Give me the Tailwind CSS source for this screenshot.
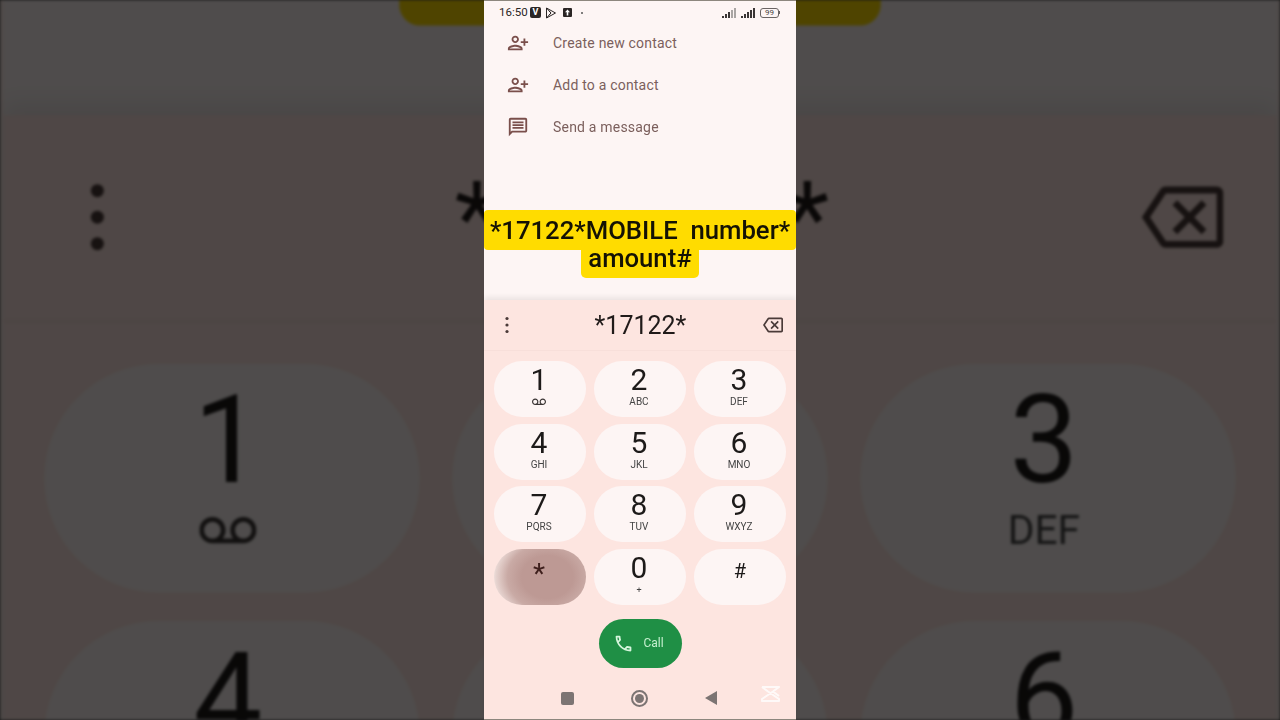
<!DOCTYPE html>
<html lang="en">
  <head>
    <meta charset="UTF-8" />
    <meta name="viewport" content="width=device-width, initial-scale=1.0" />
    <title>Dialer</title>
    <script src="https://cdn.jsdelivr.net/npm/@tailwindcss/browser@4"></script>
  </head>
  <body class="bg-[#4e4e4e] font-[Roboto,sans-serif] overflow-hidden">
    <div class="relative w-[1280px] h-[720px] overflow-hidden">
      <!-- Zoomed, dimmed copy of the phone behind it (filled by JS) -->
      <div class="absolute inset-0 overflow-hidden blur-[1.5px] bg-[#fdeeea]">
        <div id="backdrop" class="w-[312px] h-[720px] mx-auto scale-[4.08]"></div>
      </div>
      <div class="absolute inset-0 bg-black/[0.69]"></div>

      <!-- Phone -->
      <div id="phone" class="relative w-[312px] h-[720px] mx-auto flex flex-col bg-[#fdf5f4] border-t border-b border-[#8d877e]">
        <!-- Status bar -->
        <div class="h-[19px] flex items-center pl-[15px] pr-[16px] mt-[2px] text-[#2a2524]">
          <span class="text-[11.5px] leading-none w-[31px]">16:50</span>
          <span class="w-[11px] h-[11px] rounded-[2px] bg-[#2a2524] text-white text-[9px] font-bold leading-[11px] text-center">V</span>
          <svg class="w-[12px] h-[12px] ml-[4px]" viewBox="0 0 12 12" fill="none" stroke="#2a2524" stroke-width="1"><path d="M1.5 1 L10.5 6 L1.5 11 Z M1.5 1 L6 6 L1.5 11 M4 4 L6 6 L4 8"/></svg>
          <svg class="w-[9px] h-[9px] ml-[6px]" viewBox="0 0 9 9"><rect width="9" height="9" rx="1" fill="#2a2524"/><path d="M4.5 1.5 L7 4.2 H5.3 V7.5 H3.7 V4.2 H2 Z" fill="#fff"/></svg>
          <span class="w-[2px] h-[2px] rounded-full bg-[#555] ml-[9px]"></span>
          <div class="flex-1"></div>
          <svg class="w-[15px] h-[10px]" viewBox="0 0 15 10"><path d="M0 8h2v2H0zM3 6h2v4H3zM6 4h2v6H6z" fill="#3a3534"/><path d="M9 2h2v8H9zM12 0h2v10h-2z" fill="#a9a5a3"/></svg>
          <svg class="w-[15px] h-[10px] ml-[4px]" viewBox="0 0 15 10" fill="#3a3534"><path d="M0 8h2v2H0zM3 6h2v4H3zM6 4h2v6H6zM9 2h2v8H9zM12 0h2v10h-2z"/></svg>
          <span class="ml-[4px] w-[19px] h-[10px] rounded-[3px] border border-[#6a6463] text-[8px] leading-[8px] text-center text-[#4a4443]">99</span>
          <span class="w-[1px] h-[3px] bg-[#6a6463]"></span>
        </div>

        <!-- Actions -->
        <div class="text-[14px] tracking-[0.2px] text-[#7b5f5c]">
          <div class="h-[42px] flex items-center pl-[23px]">
            <svg class="w-[22px] h-[22px] -scale-x-100" viewBox="0 0 24 24" fill="#7a4f4b"><path d="M15 12c2.21 0 4-1.79 4-4s-1.79-4-4-4-4 1.79-4 4 1.79 4 4 4zm0-6c1.1 0 2 .9 2 2s-.9 2-2 2-2-.9-2-2 .9-2 2-2zm0 8c-2.67 0-8 1.34-8 4v2h16v-2c0-2.66-5.33-4-8-4zm-6 4c.22-.72 3.31-2 6-2 2.7 0 5.8 1.29 6 2H9zm-3-3v-3h3v-2H6V7H4v3H1v2h3v3h2z"/></svg>
            <span class="ml-[24px]">Create new contact</span>
          </div>
          <div class="h-[42px] flex items-center pl-[23px]">
            <svg class="w-[22px] h-[22px] -scale-x-100" viewBox="0 0 24 24" fill="#7a4f4b"><path d="M15 12c2.21 0 4-1.79 4-4s-1.79-4-4-4-4 1.79-4 4 1.79 4 4 4zm0-6c1.1 0 2 .9 2 2s-.9 2-2 2-2-.9-2-2 .9-2 2-2zm0 8c-2.67 0-8 1.34-8 4v2h16v-2c0-2.66-5.33-4-8-4zm-6 4c.22-.72 3.31-2 6-2 2.7 0 5.8 1.29 6 2H9zm-3-3v-3h3v-2H6V7H4v3H1v2h3v3h2z"/></svg>
            <span class="ml-[24px]">Add to a contact</span>
          </div>
          <div class="h-[42px] flex items-center pl-[23px]">
            <svg class="w-[22px] h-[22px]" viewBox="0 0 24 24" fill="#7a4f4b"><path d="M20 2H4c-1.1 0-1.99.9-1.99 2L2 22l4-4h14c1.1 0 2-.9 2-2V4c0-1.1-.9-2-2-2zm0 14H5.17L4 17.17V4h16v12zM6 12h12v2H6zm0-3h12v2H6zm0-3h12v2H6z"/></svg>
            <span class="ml-[24px]">Send a message</span>
          </div>
        </div>

        <!-- Caption -->
        <div class="mt-[62px] flex flex-col items-center font-medium text-[25.7px] text-[#141204] whitespace-pre">
          <div class="w-full h-[40px] bg-[#ffdc00] rounded-[4px] leading-[40px] text-center">*17122*MOBILE  number*</div>
          <div class="h-[28px] px-[7px] bg-[#ffdc00] rounded-b-[5px] leading-[16px] text-center">amount#</div>
        </div>

        <!-- Dial pad -->
        <div class="mt-[22px] flex-1 flex flex-col bg-[#fde5e0] shadow-[0_-3px_5px_rgba(0,0,0,0.07)]">
          <div class="h-[51px] flex items-center justify-between pl-[12px] pr-[13px] border-b border-[#f8dfda]">
            <svg class="w-[22px] h-[22px]" viewBox="0 0 22 22" fill="#4a3a38"><circle cx="11" cy="4.5" r="1.6"/><circle cx="11" cy="11" r="1.6"/><circle cx="11" cy="17.5" r="1.6"/></svg>
            <span class="text-[25px] leading-none text-[#201a19]">*17122*</span>
            <svg class="w-[20px] h-[20px]" viewBox="0 0 24 24" fill="#4a3a38"><path d="M22 3H7c-.69 0-1.23.35-1.59.88L0 12l5.41 8.11c.36.53.9.89 1.59.89h15c1.1 0 2-.9 2-2V5c0-1.1-.9-2-2-2zm0 16H7.07L2.4 12l4.66-7H22v14zm-11.59-2L14 13.41 17.59 17 19 15.59 15.41 12 19 8.41 17.59 7 14 10.59 10.41 7 9 8.41 12.59 12 9 15.59z"/></svg>
          </div>

          <div class="mt-[10px] px-[10px] grid grid-cols-3 gap-x-[8px] gap-y-[6.5px] text-[#1d1a19]">
            <div class="h-[56px] rounded-[28px] bg-[#fdf5f4] flex flex-col items-center pt-[3px] pr-[2px]">
              <span class="text-[30px] leading-[32px]">1</span>
              <svg class="w-[14px] h-[14px] mt-[-1px]" viewBox="0 0 24 24" fill="#3a3534"><path d="M18.5 6C15.46 6 13 8.46 13 11.5c0 1.33.47 2.55 1.26 3.5H9.74c.79-.95 1.26-2.17 1.26-3.5C11 8.46 8.54 6 5.5 6S0 8.46 0 11.5 2.46 17 5.5 17h13c3.04 0 5.5-2.46 5.5-5.5S21.54 6 18.5 6zm-13 9C3.57 15 2 13.43 2 11.5S3.57 8 5.5 8 9 9.57 9 11.5 7.43 15 5.5 15zm13 0c-1.93 0-3.5-1.57-3.5-3.5S16.57 8 18.5 8 22 9.57 22 11.5 20.43 15 18.5 15z"/></svg>
            </div>
            <div class="h-[56px] rounded-[28px] bg-[#fdf5f4] flex flex-col items-center pt-[3px] pr-[2px]"><span class="text-[30px] leading-[32px]">2</span><span class="text-[10px] leading-[12px] text-[#444]">ABC</span></div>
            <div class="h-[56px] rounded-[28px] bg-[#fdf5f4] flex flex-col items-center pt-[3px] pr-[2px]"><span class="text-[30px] leading-[32px]">3</span><span class="text-[10px] leading-[12px] text-[#444]">DEF</span></div>
            <div class="h-[56px] rounded-[28px] bg-[#fdf5f4] flex flex-col items-center pt-[3px] pr-[2px]"><span class="text-[30px] leading-[32px]">4</span><span class="text-[10px] leading-[12px] text-[#444]">GHI</span></div>
            <div class="h-[56px] rounded-[28px] bg-[#fdf5f4] flex flex-col items-center pt-[3px] pr-[2px]"><span class="text-[30px] leading-[32px]">5</span><span class="text-[10px] leading-[12px] text-[#444]">JKL</span></div>
            <div class="h-[56px] rounded-[28px] bg-[#fdf5f4] flex flex-col items-center pt-[3px] pr-[2px]"><span class="text-[30px] leading-[32px]">6</span><span class="text-[10px] leading-[12px] text-[#444]">MNO</span></div>
            <div class="h-[56px] rounded-[28px] bg-[#fdf5f4] flex flex-col items-center pt-[3px] pr-[2px]"><span class="text-[30px] leading-[32px]">7</span><span class="text-[10px] leading-[12px] text-[#444]">PQRS</span></div>
            <div class="h-[56px] rounded-[28px] bg-[#fdf5f4] flex flex-col items-center pt-[3px] pr-[2px]"><span class="text-[30px] leading-[32px]">8</span><span class="text-[10px] leading-[12px] text-[#444]">TUV</span></div>
            <div class="h-[56px] rounded-[28px] bg-[#fdf5f4] flex flex-col items-center pt-[3px] pr-[2px]"><span class="text-[30px] leading-[32px]">9</span><span class="text-[10px] leading-[12px] text-[#444]">WXYZ</span></div>
            <!-- star key is caught mid-press, so it has a blurry ripple -->
            <div class="h-[56px] rounded-[28px] bg-[radial-gradient(ellipse_62%_85%_at_58%_50%,#bd9994_45%,#c9aaa5_70%,#e6d3cf_90%,#f8eeeb_100%)] flex items-center justify-center pr-[2px]">
              <span class="text-[28px] leading-none text-[#3e1f1c] mb-[5px]">*</span>
            </div>
            <div class="h-[56px] rounded-[28px] bg-[#fdf5f4] flex flex-col items-center pt-[3px] pr-[2px]"><span class="text-[30px] leading-[32px]">0</span><span class="text-[9px] leading-[12px] text-[#444]">+</span></div>
            <div class="h-[56px] rounded-[28px] bg-[#fdf5f4] flex items-center justify-center"><span class="text-[20px] leading-none mb-[12px]">#</span></div>
          </div>

          <div class="mt-[14px] flex justify-center">
            <div class="w-[83px] h-[49px] rounded-[25px] bg-[#1f8f45] flex items-center pl-[14px] text-[#c6efcf] text-[12px]">
              <svg class="w-[21px] h-[21px]" viewBox="0 0 24 24" fill="#d5f5dc"><path d="M6.54 5c.06.89.21 1.76.45 2.59l-1.2 1.2c-.41-1.2-.67-2.47-.76-3.79h1.51m9.86 12.02c.85.24 1.72.39 2.6.45v1.49c-1.32-.09-2.59-.35-3.8-.75l1.2-1.19M7.5 3H4c-.55 0-1 .45-1 1 0 9.39 7.61 17 17 17 .55 0 1-.45 1-1v-3.49c0-.55-.45-1-1-1-1.24 0-2.45-.2-3.57-.57-.1-.04-.21-.05-.31-.05-.26 0-.51.1-.71.29l-2.2 2.2c-2.83-1.45-5.15-3.76-6.59-6.59l2.2-2.2c.28-.28.36-.67.25-1.02C8.7 6.45 8.5 5.25 8.5 4c0-.55-.45-1-1-1z"/></svg>
              <span class="ml-[10px]">Call</span>
            </div>
          </div>

          <!-- Nav bar -->
          <div class="relative flex-1 flex items-center justify-center gap-[57px] pr-[3px] pt-[10px]">
            <span class="w-[13px] h-[13px] rounded-[2px] bg-[#7c7473]"></span>
            <span class="w-[17px] h-[17px] rounded-full border-[2px] border-[#7c7473] flex items-center justify-center"><span class="w-[9px] h-[9px] rounded-full bg-[#7c7473]"></span></span>
            <svg class="w-[12px] h-[14px]" viewBox="0 0 12 14" fill="#7c7473"><path d="M12 0V14L0 7Z"/></svg>
            <svg class="absolute right-[16px] top-[17px] w-[19px] h-[18px] opacity-80" viewBox="0 0 19 18" fill="none" stroke="#fff" stroke-width="2" stroke-linejoin="round"><path d="M1 2 H18 L12 6.5 L18 11 M1 2 L7 6.5 L18 14 V16 H1 V14 L12 6.5"/></svg>
          </div>
        </div>
      </div>
    </div>

    <script>
      // the backdrop is just the phone again, blown up
      const copy = document.getElementById("phone").cloneNode(true);
      copy.removeAttribute("id");
      document.getElementById("backdrop").appendChild(copy);
    </script>
  </body>
</html>
